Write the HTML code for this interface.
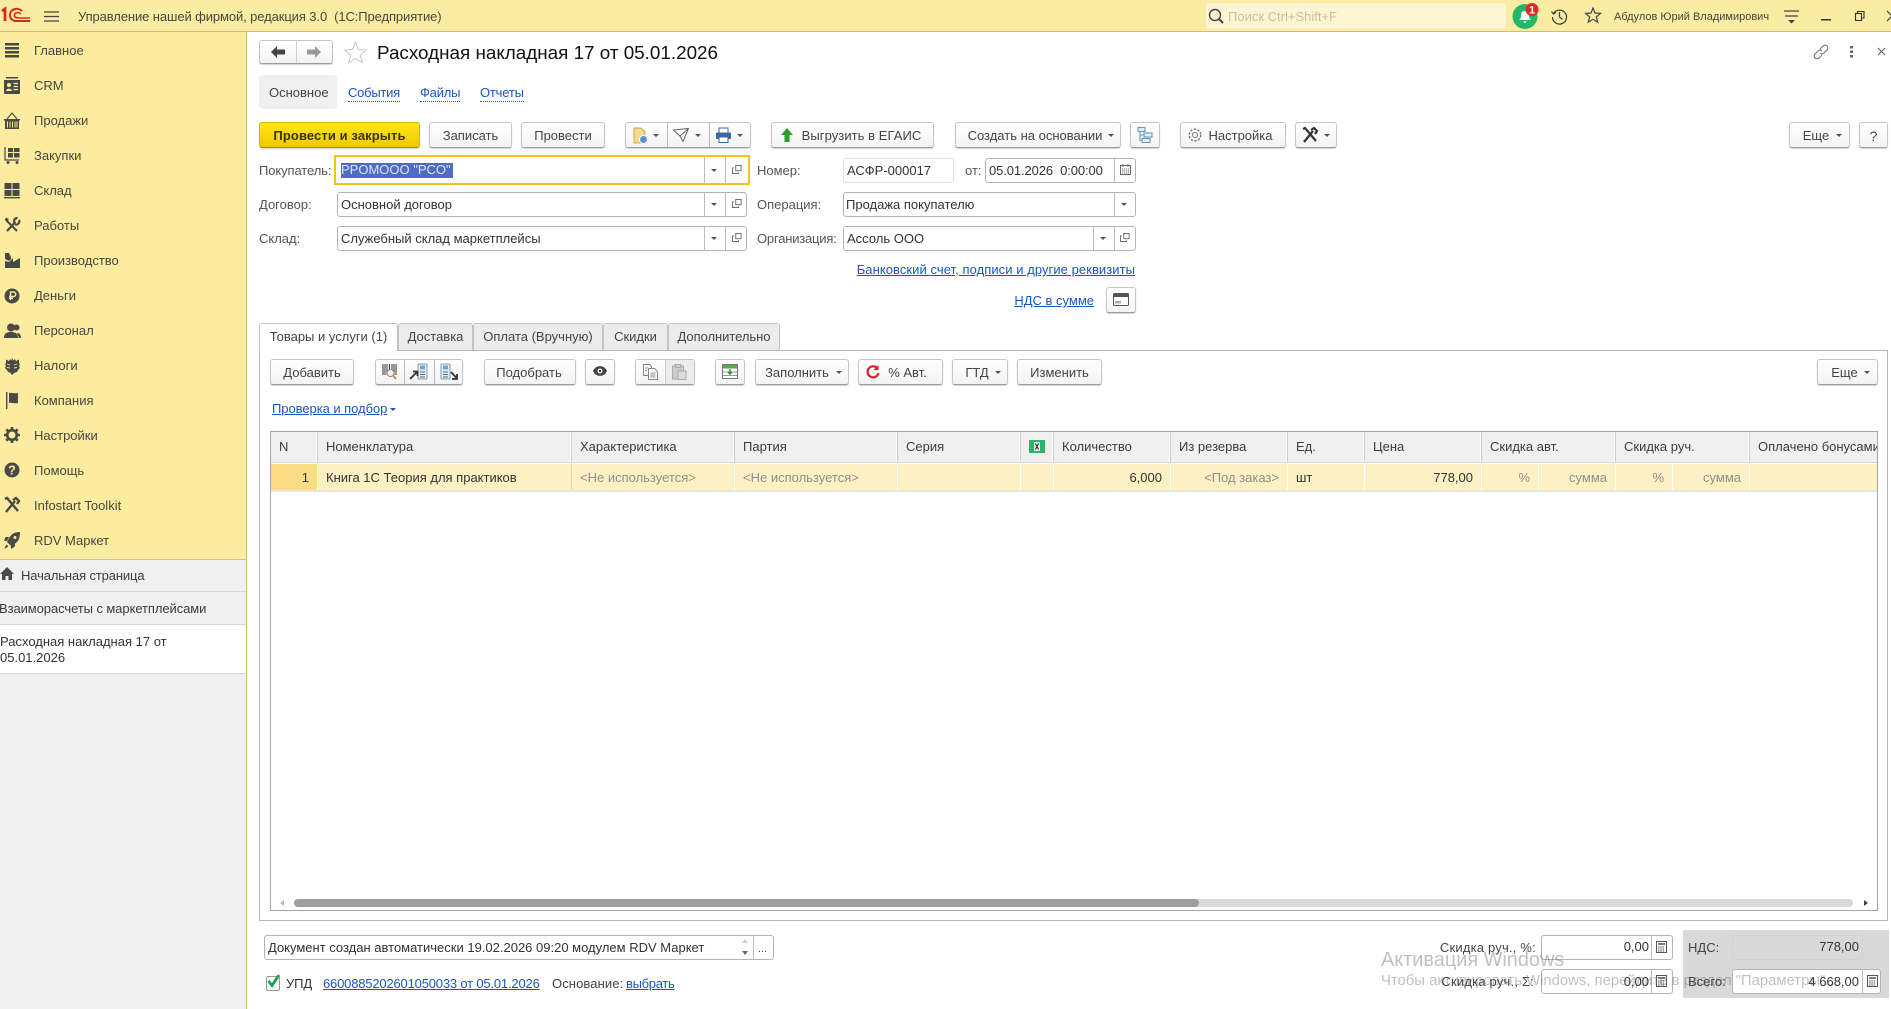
<!DOCTYPE html>
<html lang="ru"><head><meta charset="utf-8"><title>Расходная накладная</title>
<style>
html,body{margin:0;padding:0;width:1891px;height:1009px;overflow:hidden;background:#fff}
body{font-family:"Liberation Sans",Arial,sans-serif;font-size:13px;color:#3c3c3c;position:relative}
.a{position:absolute}
.t{position:absolute;white-space:nowrap;line-height:16px;height:16px}
.b{position:absolute;box-sizing:border-box;height:26px;border:1px solid #c6c6c6;border-bottom:1px solid #9c9c9c;border-radius:3px;background:linear-gradient(#fff,#f3f3f3);box-shadow:0 1px 1px rgba(0,0,0,.18);text-align:center;line-height:26px;white-space:nowrap;color:#444}
.f{position:absolute;box-sizing:border-box;height:25px;border:1px solid #b4b4b4;border-radius:3px;background:#fff}
.d{position:absolute;width:1px;background:#bcbcbc}
.ap{position:absolute;width:0;height:0;border-left:3px solid transparent;border-right:3px solid transparent;border-top:3px solid #555}
.l{color:#1a56c0;text-decoration:underline}
.h{position:absolute;top:432px;height:30px;background:#f0f0f0;border-right:1px solid #cfcfcf;box-shadow:inset -1px 0 0 #fff}
.c{position:absolute;top:464px;height:26px;background:#fdf0c3;border-right:1px solid #fff}
.g{color:#8f8f8f}
.n{position:absolute;left:34px;white-space:nowrap;line-height:16px;color:#47473f}
svg{position:absolute;overflow:visible}
.tb{position:absolute;top:323px;height:27px;box-sizing:border-box;background:#ececec;border:1px solid #c4c4c4;border-bottom:none;border-radius:3px 3px 0 0;text-align:center;line-height:26px;color:#444;white-space:nowrap}
</style></head><body>

<!-- top bar -->
<div class="a" style="left:0;top:0;width:1891px;height:31px;background:#fbeca3;border-bottom:1px solid #cfbd6c;box-sizing:content-box"></div>
<svg style="left:1px;top:7px" width="30" height="17" viewBox="0 0 30 17" fill="none" stroke="#d9281e"><path d="M1 4 L4 2 V14" stroke-width="2.8"/><path d="M21 4 C19 2 16 1.500 14 2 C10 3 9 6 9 8 C9 11 11 14 15 14 H29" stroke-width="2"/><path d="M20 7 C18 5.500 16 5.500 15 6 C13 7 13 9 14 10 C15 11 17 11 29 11" stroke-width="1.600"/></svg>
<svg style="left:44px;top:11px" width="15" height="11" stroke="#444" stroke-width="1.300"><path d="M0 1H15M0 5.500H15M0 10H15"/></svg>
<div class="t" style="left:78px;top:9px;color:#47473c;letter-spacing:-.1px">Управление нашей фирмой, редакция 3.0&nbsp; (1С:Предприятие)</div>

<div class="a" style="left:1206px;top:3px;width:300px;height:26px;background:#fdf6d2;border-radius:3px"></div>
<svg style="left:1208px;top:8px" width="16" height="17" fill="none" stroke="#444" stroke-width="1.400"><circle cx="7" cy="7" r="5.500"/><path d="M11 11l4 4" stroke-width="2"/></svg>
<div class="t" style="left:1228px;top:9px;color:#c4c0a6">Поиск Ctrl+Shift+F</div>
<svg style="left:1512px;top:3px" width="30" height="26"><ellipse cx="13" cy="13.500" rx="12.500" ry="12.500" fill="#21b866"/><path d="M13 8c-3 0-4 2-4 5 0 2-1 3-2 4h12c-1-1-2-2-2-4 0-3-1-5-4-5zM11 18.500h4l-2 2z" fill="#fff"/><circle cx="20" cy="6.500" r="6.500" fill="#e8262a"/><text x="20" y="10.500" font-size="11" font-weight="bold" fill="#fff" text-anchor="middle" font-family="Liberation Sans">1</text></svg>
<svg style="left:1551px;top:8px" width="17" height="17" fill="none" stroke="#444" stroke-width="1.300"><path d="M2.500 5.500A7 7 0 1 1 1.500 9"/><path d="M0.500 3.500l2 2.500 2.500-1.500"/><path d="M8.500 4v5l3 2.500"/></svg>
<svg style="left:1585px;top:7px" width="16" height="16" fill="none" stroke="#444" stroke-width="1.200"><path d="M8 1l2 5 5.500.4-4.200 3.500 1.400 5.300L8 12.300 3.300 15.200l1.400-5.300L.5 6.400 6 6z"/></svg>
<div class="t" style="left:1614px;top:9px;font-size:11px;color:#47473c">Абдулов Юрий Владимирович</div>
<svg style="left:1784px;top:10px" width="15" height="14" stroke="#444" stroke-width="1.200"><path d="M0 1H15M1 6H14"/><path d="M4 10h7l-3.500 3.500z" fill="#444" stroke="none"/></svg>
<svg style="left:1821px;top:19px" width="10" height="2"><rect width="10" height="1.500" fill="#333"/></svg>
<svg style="left:1855px;top:11px" width="10" height="10" fill="none" stroke="#333" stroke-width="1.100"><rect x=".5" y="2.500" width="6" height="7"/><path d="M2.500 2.500V.5H9V7H6.500"/></svg>
<svg style="left:1887px;top:11px" width="6" height="10" stroke="#333" stroke-width="1.100"><path d="M0 0L10 10M10 0L0 10"/></svg>

<!-- sidebar -->
<div class="a" style="left:0;top:32px;width:246px;height:527px;background:#fbec9f;border-right:1px solid #cdbb68"></div>
<div class="a" style="left:0;top:559px;width:247px;height:450px;background:#f0f0f0;border-right:1px solid #cdbb68;border-top:1px solid #cfc493;box-sizing:border-box"></div>
<div class="a" style="left:0;top:591px;width:246px;height:1px;background:#d8d8d8"></div>
<div class="a" style="left:0;top:624px;width:246px;height:50px;background:#fff;border-top:1px solid #d8d8d8;border-bottom:1px solid #d8d8d8;box-sizing:border-box"></div>

<div class="n" style="top:43px">Главное</div>
<div class="n" style="top:78px">CRM</div>
<div class="n" style="top:113px">Продажи</div>
<div class="n" style="top:148px">Закупки</div>
<div class="n" style="top:183px">Склад</div>
<div class="n" style="top:218px">Работы</div>
<div class="n" style="top:253px">Производство</div>
<div class="n" style="top:288px">Деньги</div>
<div class="n" style="top:323px">Персонал</div>
<div class="n" style="top:358px">Налоги</div>
<div class="n" style="top:393px">Компания</div>
<div class="n" style="top:428px">Настройки</div>
<div class="n" style="top:463px">Помощь</div>
<div class="n" style="top:498px">Infostart Toolkit</div>
<div class="n" style="top:533px">RDV Маркет</div>

<svg style="left:5px;top:43px" width="14" height="15" fill="#4a4a44"><rect width="14" height="2.500" y="0"/><rect width="14" height="2.500" y="4"/><rect width="14" height="2.500" y="8"/><rect width="14" height="2.500" y="12"/></svg>
<svg style="left:4px;top:77px" width="16" height="17" fill="#4a4a44"><path d="M2 0h12v1.500H2zM0 3h16v13a1 1 0 0 1-1 1H1a1 1 0 0 1-1-1z"/><circle cx="5" cy="8" r="2" fill="#fbec9f"/><path d="M2 14c0-3 6-3 6 0z" fill="#fbec9f"/><path d="M9.500 6.500H14M9.500 9.500H14M9.500 12.500H14" stroke="#fbec9f" stroke-width="1.200"/></svg>
<svg style="left:4px;top:113px" width="16" height="16" fill="#4a4a44"><path d="M0 6h16v1.500H15V16H1V7.500H0z"/><path d="M3 6L8 0l5 6" fill="none" stroke="#4a4a44" stroke-width="1.200"/><path d="M3.500 8.500v6M6 8.500v6M8.500 8.500v6M11 8.500v6M13 8.500v6" stroke="#fbec9f" stroke-width="1"/></svg>
<svg style="left:4px;top:147px" width="16" height="17" fill="#4a4a44"><path d="M1 0v13h14" fill="none" stroke="#4a4a44" stroke-width="1.200"/><rect x="4" y="1" width="5" height="4"/><rect x="10" y="1" width="5.500" height="4"/><rect x="4" y="6" width="5" height="4.500"/><rect x="10" y="6" width="5.500" height="4.500"/><circle cx="4" cy="15.500" r="1.500"/><circle cx="13" cy="15.500" r="1.500"/></svg>
<svg style="left:4px;top:183px" width="16" height="15" fill="#4a4a44"><rect width="7" height="6" x="0.500"/><rect width="7" height="6" x="8.500"/><rect width="7" height="6" x="0.500" y="7"/><rect width="7" height="6" x="8.500" y="7"/><rect width="16" height="1.400" y="14"/></svg>
<svg style="left:4px;top:217px" width="16" height="16" fill="none" stroke="#4a4a44" stroke-width="2.200"><path d="M3 14L11.500 5"/><path d="M15 3a3.300 3.300 0 0 1-4 4.500M10.500 6a3.300 3.300 0 0 1 3-5"/><path d="M2 3l11 11" stroke-width="2"/><path d="M0.500 2.500l2-2 2.500 2-2 2z" fill="#4a4a44" stroke="none"/></svg>
<svg style="left:5px;top:253px" width="15" height="15" fill="#4a4a44"><path d="M0 6V0h4l2 4v2l-2 2z"/><path d="M0 15V8l4 1 4-4v4l7-4v10z"/></svg>
<svg style="left:4px;top:288px" width="16" height="16"><circle cx="8" cy="8" r="7.500" fill="#4a4a44"/><path d="M6.500 12V4h3a2.200 2.200 0 0 1 0 4.500h-4.500M5 10.300h4" fill="none" stroke="#fbec9f" stroke-width="1.400"/></svg>
<svg style="left:4px;top:323px" width="17" height="16" fill="#4a4a44"><circle cx="7" cy="4.500" r="4"/><path d="M0 15c0-5 3-6 7-6s7 1 7 6z"/><circle cx="12.500" cy="4.500" r="3"/><path d="M15 15h2c0-4-2-5-4-5z"/></svg>
<svg style="left:4px;top:358px" width="16" height="17" fill="#4a4a44"><path d="M8 0l1.500 2.500L11 1l1 2 3-1.500V5l1 1-1 2 1 2-2 2-1 2-2 .5L8 17l-2-2.500L4 14l-1-2-2-2 1-2-1-2 1-1V1.500l3 1.500 1-2 1.500 1.500z"/><path d="M3 6l3 1M13 6l-3 1M3 9.500l3 .5M13 9.500l-3 .5" stroke="#fbec9f" stroke-width=".9"/></svg>
<svg style="left:6px;top:392px" width="13" height="17" fill="#4a4a44"><rect width="1.400" height="17"/><path d="M3 1c3-1 4 1 9 0v10c-4 1-6-1-9 0z"/></svg>
<svg style="left:4px;top:427px" width="16" height="16" viewBox="0 0 16 16"><circle cx="8" cy="8" r="4.800" fill="none" stroke="#4a4a44" stroke-width="2.600"/><path d="M8 0v3M8 13v3M0 8h3M13 8h3M2.300 2.300l2 2M11.700 11.700l2 2M13.700 2.300l-2 2M4.300 11.700l-2 2" stroke="#4a4a44" stroke-width="2.600"/></svg>
<svg style="left:4px;top:462px" width="16" height="16"><circle cx="8" cy="8" r="7.500" fill="#4a4a44"/><text x="8" y="12.500" font-size="12.500" font-weight="bold" fill="#fbec9f" text-anchor="middle" font-family="Liberation Sans">?</text></svg>
<svg style="left:4px;top:497px" width="16" height="16" fill="none" stroke="#4a4a44" stroke-width="2.400"><path d="M2 15L11 4"/><path d="M9 3l3-2 3 3-2 3"/><path d="M1 2l2-1 11 13"/></svg>
<svg style="left:4px;top:532px" width="16" height="17" fill="#4a4a44"><path d="M16 0C10 0 7 2 4 8l-1 2 4 4 2-1c5-3 7-6 7-13z"/><path d="M5 5H1.500L0 9h3zM11 11v3.500L7 17v-3zM2.500 12.500L0 17l4.500-2.500z"/><circle cx="11" cy="5.500" r="1.500" fill="#fbec9f"/></svg>

<svg style="left:0;top:567px" width="14" height="13" fill="#4a4a44"><path d="M7 0l7 7h-2v6H8.500V9h-3v4H2V7H0z"/></svg>
<div class="t" style="left:21px;top:568px;letter-spacing:-.13px">Начальная страница</div>
<div class="t" style="left:-1px;top:601px;letter-spacing:-.08px">Взаиморасчеты с маркетплейсами</div>
<div class="t" style="left:0;top:634px;color:#333">Расходная накладная 17 от</div>
<div class="t" style="left:0;top:650px;color:#333">05.01.2026</div>

<!-- header -->
<div class="b" style="left:259px;top:40px;width:74px;height:24px"></div>
<div class="d" style="left:296px;top:41px;height:22px;background:#d0d0d0"></div>
<svg style="left:271px;top:46px" width="14" height="12" fill="#444"><path d="M0 6l6-6v3.500h8v5H6V12z"/></svg>
<svg style="left:307px;top:46px" width="14" height="12" fill="#999"><path d="M14 6L8 0v3.500H0v5h8V12z"/></svg>
<svg style="left:344px;top:41px" width="23" height="22" fill="#fff" stroke="#c8c8c8"><path d="M11.500 1l3 7.500 8 .5-6.200 5 2 7.500-6.800-4.200L4.700 21.500l2-7.500L.5 9l8-.5z"/></svg>
<div class="t" style="left:377px;top:41px;font-size:18.850px;line-height:23px;height:23px;color:#111">Расходная накладная 17 от 05.01.2026</div>
<svg style="left:1813px;top:44px" width="16" height="16" fill="none" stroke="#777" stroke-width="1.200"><path d="M7 5l3-3a2.800 2.800 0 0 1 4 4l-3 3a2.800 2.800 0 0 1-4 0"/><path d="M9 11l-3 3a2.800 2.800 0 0 1-4-4l3-3a2.800 2.800 0 0 1 4 0"/></svg>
<svg style="left:1850px;top:46px" width="4" height="12" fill="#666"><rect width="3" height="2.500"/><rect width="3" height="2.500" y="4.500"/><rect width="3" height="2.500" y="9"/></svg>
<svg style="left:1877px;top:47px" width="9" height="9" stroke="#666" stroke-width="1.100"><path d="M1 1l7 7M8 1L1 8"/></svg>

<div class="a" style="left:259px;top:75px;width:78px;height:34px;background:#f0f0f0;border-radius:4px"></div>
<div class="t" style="left:269px;top:85px;color:#444">Основное</div>
<div class="t" style="left:348px;top:85px;color:#1a56c0;border-bottom:1px dotted #1a56c0;letter-spacing:-.25px">События</div>
<div class="t" style="left:420px;top:85px;color:#1a56c0;border-bottom:1px dotted #1a56c0;letter-spacing:-.2px">Файлы</div>
<div class="t" style="left:480px;top:85px;color:#1a56c0;border-bottom:1px dotted #1a56c0;letter-spacing:-.2px">Отчеты</div>

<!-- command bar -->
<div class="b" style="left:259px;top:122px;width:161px;background:linear-gradient(#ffe61a,#f0c800);border-color:#d6b400 #d6b400 #a08a00;font-weight:bold;color:#3b3300;letter-spacing:.1px">Провести и закрыть</div>
<div class="b" style="left:429px;top:122px;width:83px">Записать</div>
<div class="b" style="left:521px;top:122px;width:84px">Провести</div>
<div class="b" style="left:625px;top:122px;width:126px"></div>
<div class="d" style="left:667px;top:123px;height:24px"></div><div class="d" style="left:709px;top:123px;height:24px"></div>
<svg style="left:633px;top:127px" width="15" height="17"><path d="M1 1h7l4 4v11H1z" fill="#f6d98c" stroke="#c9a850"/><circle cx="10.500" cy="12.500" r="4" fill="#5b8fd1" stroke="#fff"/></svg>
<div class="ap" style="left:653px;top:134px"></div>
<svg style="left:673px;top:128px" width="16" height="14" fill="none" stroke="#666" stroke-width="1"><path d="M.5 2L15.500.5 10 13.500 7 8zM7 8l8.500-7.500"/></svg>
<div class="ap" style="left:695px;top:134px"></div>
<svg style="left:716px;top:127px" width="15" height="16"><path d="M3 1h9v5H3z" fill="#fff" stroke="#3a6a9c"/><rect y="5.500" width="15" height="6.500" rx="1" fill="#3a6a9c"/><path d="M3 10h9v5.500H3z" fill="#fff" stroke="#3a6a9c"/></svg>
<div class="ap" style="left:737px;top:134px"></div>

<div class="b" style="left:771px;top:122px;width:163px;padding-left:18px;letter-spacing:.06px">Выгрузить в ЕГАИС</div>
<svg style="left:781px;top:128px" width="12" height="14" fill="#2e9e2e"><path d="M6 0l6 7H8.500v7h-5V7H0z"/></svg>
<div class="b" style="left:955px;top:122px;width:166px;padding-right:6px">Создать на основании</div><div class="ap" style="left:1108px;top:134px"></div>
<div class="b" style="left:1130px;top:122px;width:30px"></div>
<svg style="left:1137px;top:127px" width="16" height="16" fill="none" stroke="#6a9abf" stroke-width="1.100"><rect x="1" y=".5" width="7" height="4" fill="#e4eff7"/><rect x="7" y="6" width="8" height="4" fill="#e4eff7"/><rect x="5" y="11.500" width="8" height="4" fill="#e4eff7"/><path d="M3 4.500V13.500H5M3 8H7"/></svg>
<div class="b" style="left:1180px;top:122px;width:106px;padding-left:15px">Настройка</div>
<svg style="left:1187px;top:127px" width="16" height="16" viewBox="0 0 16 16" fill="none" stroke="#777"><circle cx="8" cy="8" r="2.500"/><circle cx="8" cy="8" r="5.800" stroke-width="1.400" stroke-dasharray="2.300 1.400"/></svg>
<div class="b" style="left:1295px;top:122px;width:42px"></div>
<svg style="left:1302px;top:127px" width="16" height="16" fill="none" stroke="#333" stroke-width="2.200"><path d="M2 15L11 4"/><path d="M9 3l3-2 3 3-2 3"/><path d="M1 2l2-1 11 13"/></svg>
<div class="ap" style="left:1324px;top:134px"></div>
<div class="b" style="left:1789px;top:122px;width:61px;padding-right:7px">Еще</div><div class="ap" style="left:1836px;top:134px"></div>
<div class="b" style="left:1859px;top:122px;width:29px;font-size:14px">?</div>

<!-- form left -->
<div class="t" style="left:259px;top:163px;color:#555;letter-spacing:-.1px">Покупатель:</div>
<div class="t" style="left:259px;top:197px;color:#555">Договор:</div>
<div class="t" style="left:259px;top:231px;color:#555">Склад:</div>
<div class="a" style="left:334px;top:155px;width:416px;height:30px;box-sizing:border-box;border:2px solid #f5c518;background:#fff"></div>
<div class="a" style="left:341px;top:163px;width:112px;height:15px;background:#4f6cc4"></div>
<div class="t" style="left:341px;top:162px;color:#dfe5f5">PPOMOOO "PCO"</div>
<div class="d" style="left:704px;top:157px;height:26px"></div><div class="d" style="left:725px;top:157px;height:26px"></div>
<div class="ap" style="left:711px;top:169px"></div>
<svg style="left:732px;top:165px" width="10" height="9" viewBox="0 0 12 11" fill="none" stroke="#555"><rect x="4.500" y=".5" width="6.500" height="6.500"/><path d="M2.500 3.500H.5V10.500H8V9"/></svg>

<div class="f" style="left:337px;top:192px;width:410px"></div>
<div class="t" style="left:341px;top:197px;color:#333">Основной договор</div>
<div class="d" style="left:704px;top:193px;height:23px"></div><div class="d" style="left:725px;top:193px;height:23px"></div>
<div class="ap" style="left:711px;top:203px"></div>
<svg style="left:732px;top:199px" width="10" height="9" viewBox="0 0 12 11" fill="none" stroke="#555"><rect x="4.500" y=".5" width="6.500" height="6.500"/><path d="M2.500 3.500H.5V10.500H8V9"/></svg>

<div class="f" style="left:337px;top:226px;width:410px"></div>
<div class="t" style="left:341px;top:231px;color:#333">Служебный склад маркетплейсы</div>
<div class="d" style="left:704px;top:227px;height:23px"></div><div class="d" style="left:725px;top:227px;height:23px"></div>
<div class="ap" style="left:711px;top:237px"></div>
<svg style="left:732px;top:233px" width="10" height="9" viewBox="0 0 12 11" fill="none" stroke="#555"><rect x="4.500" y=".5" width="6.500" height="6.500"/><path d="M2.500 3.500H.5V10.500H8V9"/></svg>

<!-- form right -->
<div class="t" style="left:757px;top:163px;color:#555">Номер:</div>
<div class="f" style="left:843px;top:158px;width:111px;border-color:#e0e0e0"></div>
<div class="t" style="left:847px;top:163px;color:#333">АСФР-000017</div>
<div class="t" style="left:965px;top:163px;color:#555">от:</div>
<div class="f" style="left:985px;top:158px;width:151px"></div>
<div class="t" style="left:989px;top:163px;color:#333;letter-spacing:-.1px">05.01.2026&nbsp; 0:00:00</div>
<div class="d" style="left:1114px;top:159px;height:23px"></div>
<svg style="left:1120px;top:164px" width="11" height="11" fill="none" stroke="#666"><rect x=".5" y="1.500" width="10" height="9"/><path d="M3 0v3M8 0v3" /><path d="M2 5h7M2 7h7M2 9h7" stroke-dasharray="1.200 .8"/></svg>

<div class="t" style="left:757px;top:197px;color:#555">Операция:</div>
<div class="f" style="left:843px;top:192px;width:293px"></div>
<div class="t" style="left:846px;top:197px;color:#333">Продажа покупателю</div>
<div class="d" style="left:1114px;top:193px;height:23px"></div>
<div class="ap" style="left:1121px;top:203px"></div>

<div class="t" style="left:757px;top:231px;color:#555;letter-spacing:-.2px">Организация:</div>
<div class="f" style="left:843px;top:226px;width:293px"></div>
<div class="t" style="left:847px;top:231px;color:#333">Ассоль ООО</div>
<div class="d" style="left:1093px;top:227px;height:23px"></div><div class="d" style="left:1114px;top:227px;height:23px"></div>
<div class="ap" style="left:1100px;top:237px"></div>
<svg style="left:1120px;top:233px" width="10" height="9" viewBox="0 0 12 11" fill="none" stroke="#555"><rect x="4.500" y=".5" width="6.500" height="6.500"/><path d="M2.500 3.500H.5V10.500H8V9"/></svg>

<div class="t l" style="right:756px;top:262px;letter-spacing:.06px">Банковский счет, подписи и другие реквизиты</div>
<div class="t l" style="right:797px;top:293px">НДС в сумме</div>
<div class="b" style="left:1106px;top:287px;width:30px"></div>
<svg style="left:1113px;top:293px" width="16" height="13"><rect x=".5" y=".5" width="15" height="12" rx="1" fill="#fff" stroke="#555"/><rect x="1" y="1" width="14" height="3" fill="#555"/><path d="M3 8v2.500M5 8v2.500M7 8v2.500" stroke="#555"/></svg>

<!-- tabs and panel -->
<div class="a" style="left:259px;top:350px;width:1629px;height:571px;box-sizing:border-box;border:1px solid #b6b6b6"></div>
<div class="tb" style="left:398px;width:75px">Доставка</div>
<div class="tb" style="left:473px;width:130px">Оплата (Вручную)</div>
<div class="tb" style="left:603px;width:65px">Скидки</div>
<div class="tb" style="left:668px;width:112px;letter-spacing:-.05px">Дополнительно</div>
<div class="tb" style="left:259px;width:139px;height:28px;background:#fff;z-index:2">Товары и услуги (1)</div>

<!-- panel toolbar -->
<div class="b" style="left:270px;top:359px;width:84px">Добавить</div>
<div class="b" style="left:375px;top:359px;width:88px"></div>
<div class="d" style="left:404px;top:360px;height:24px"></div><div class="d" style="left:434px;top:360px;height:24px"></div>
<svg style="left:382px;top:364px" width="17" height="16"><path d="M1 0v11M3 0v11M5 0v11M7.500 0v7M10 0v7M12 0v11M14 0v11" stroke="#333"/><circle cx="8.500" cy="9" r="3.500" fill="#f3f6f9" stroke="#888"/><path d="M11 11.500l3 3.500" stroke="#d2883c" stroke-width="2"/></svg>
<svg style="left:410px;top:364px" width="18" height="16"><rect x="8" y="0" width="9" height="15" rx="1" fill="#e6eef4" stroke="#7b9db6"/><rect x="10" y="1.500" width="5" height="4" fill="#67a9dc"/><path d="M10 8h5M10 10.500h5M10 13h5" stroke="#666"/><path d="M0 15L7 8M3 7.500h4.500V12" fill="none" stroke="#333" stroke-width="1.800"/></svg>
<svg style="left:440px;top:364px" width="18" height="16"><rect x="1" y="0" width="9" height="15" rx="1" fill="#e6eef4" stroke="#7b9db6"/><rect x="3" y="1.500" width="5" height="4" fill="#67a9dc"/><path d="M3 8h5M3 10.500h5M3 13h5" stroke="#666"/><path d="M11 8l6 6.500M17 10v5h-5" fill="none" stroke="#333" stroke-width="1.800"/></svg>
<div class="b" style="left:484px;top:359px;width:92px;padding-right:2px">Подобрать</div>
<div class="b" style="left:585px;top:359px;width:30px"></div>
<svg style="left:593px;top:366px" width="14" height="10"><path d="M0 5c3-6.500 11-6.500 14 0-3 6.500-11 6.500-14 0z" fill="#444"/><circle cx="7" cy="5" r="2.500" fill="#fff"/><circle cx="7" cy="5" r="1.200" fill="#444"/></svg>
<div class="b" style="left:635px;top:359px;width:60px;"></div>
<div class="a" style="left:666px;top:360px;width:28px;height:24px;background:#ececec"></div>
<div class="d" style="left:665px;top:360px;height:24px;background:#d0d0d0"></div>
<svg style="left:643px;top:364px" width="15" height="16" fill="#fff" stroke="#888"><path d="M.5.500h6l2 2v9h-8z"/><path d="M5.500 4.500h6l3 3v8h-9z"/><path d="M2 4h3M2 6.500h2M7.500 9h5M7.500 11h5M7.500 13h5" stroke-width=".9"/></svg>
<svg style="left:672px;top:364px" width="15" height="16" fill="#ccc" stroke="#aaa"><rect x=".5" y="2" width="11" height="13"/><rect x="3" y="0.500" width="6" height="3"/><path d="M6 7h8v8.500H6z" fill="#ddd"/></svg>
<div class="b" style="left:715px;top:359px;width:30px"></div>
<svg style="left:722px;top:364px" width="16" height="15" fill="none"><rect x=".5" y=".5" width="15" height="14" stroke="#777" fill="#fff"/><rect x="1" y="1" width="14" height="3.500" fill="#5aaa48"/><path d="M1 8h14M1 11.500h14" stroke="#999"/><path d="M8 5v5M6 8l2 2 2-2" stroke="#2a8a2a" stroke-width="1.400"/></svg>
<div class="b" style="left:755px;top:359px;width:94px;padding-right:10px">Заполнить</div><div class="ap" style="left:836px;top:371px"></div>
<div class="b" style="left:858px;top:359px;width:85px;padding-left:14px">% Авт.</div>
<svg style="left:866px;top:365px" width="14" height="14" fill="none" stroke="#e01f24" stroke-width="2.200"><path d="M11.500 3.500A5.500 5.500 0 1 0 12.500 8"/><path d="M12.500 0v5h-5z" fill="#e01f24" stroke="none"/></svg>
<div class="b" style="left:952px;top:359px;width:56px;padding-right:6px">ГТД</div><div class="ap" style="left:995px;top:371px"></div>
<div class="b" style="left:1017px;top:359px;width:85px">Изменить</div>
<div class="b" style="left:1817px;top:359px;width:61px;padding-right:6px">Еще</div><div class="ap" style="left:1864px;top:371px"></div>

<div class="t l" style="left:272px;top:401px;letter-spacing:-.05px">Проверка и подбор</div>
<div class="ap" style="left:390px;top:408px;border-top-color:#1a56c0"></div>

<!-- table -->
<div class="a" style="left:270px;top:431px;width:1608px;height:480px;box-sizing:border-box;border:1px solid #a6a6a6"></div>
<div class="h" style="left:271px;width:46px"></div>
<div class="h" style="left:318px;width:253px"></div>
<div class="h" style="left:572px;width:162px"></div>
<div class="h" style="left:735px;width:162px"></div>
<div class="h" style="left:898px;width:122px"></div>
<div class="h" style="left:1021px;width:32px"></div>
<div class="h" style="left:1054px;width:116px"></div>
<div class="h" style="left:1171px;width:116px"></div>
<div class="h" style="left:1288px;width:76px"></div>
<div class="h" style="left:1365px;width:116px"></div>
<div class="h" style="left:1482px;width:133px"></div>
<div class="h" style="left:1616px;width:133px"></div>
<div class="h" style="left:1750px;width:127px;border-right:none;box-shadow:none"></div>
<div class="a" style="left:271px;top:462px;width:1606px;height:1px;background:#d6d6d6"></div>

<div class="t" style="left:279px;top:439px">N</div>
<div class="t" style="left:326px;top:439px">Номенклатура</div>
<div class="t" style="left:580px;top:439px">Характеристика</div>
<div class="t" style="left:743px;top:439px">Партия</div>
<div class="t" style="left:906px;top:439px">Серия</div>
<svg style="left:1029px;top:440px" width="16" height="14"><rect width="16" height="13" fill="#2fb36a"/><rect x="5" y="2" width="6" height="9" fill="#e4efe6"/><path d="M6.500 3.500l3 6M9.500 3.500l-3 6" stroke="#222"/></svg>
<div class="t" style="left:1062px;top:439px">Количество</div>
<div class="t" style="left:1179px;top:439px">Из резерва</div>
<div class="t" style="left:1296px;top:439px">Ед.</div>
<div class="t" style="left:1373px;top:439px">Цена</div>
<div class="t" style="left:1490px;top:439px">Скидка авт.</div>
<div class="t" style="left:1624px;top:439px">Скидка руч.</div>
<div class="a" style="left:1758px;top:439px;width:119px;height:16px;overflow:hidden;white-space:nowrap;line-height:16px">Оплачено бонусами</div>

<div class="c" style="left:271px;width:46px;background:#fbdc87;border-right:none"></div>
<div class="c" style="left:318px;width:253px;border-right-color:#e0d8b8"></div>
<div class="c" style="left:572px;width:162px"></div>
<div class="c" style="left:735px;width:162px"></div>
<div class="c" style="left:898px;width:122px"></div>
<div class="c" style="left:1021px;width:32px"></div>
<div class="c" style="left:1054px;width:116px"></div>
<div class="c" style="left:1171px;width:116px"></div>
<div class="c" style="left:1288px;width:76px"></div>
<div class="c" style="left:1365px;width:116px"></div>
<div class="c" style="left:1482px;width:56px"></div>
<div class="c" style="left:1539px;width:76px"></div>
<div class="c" style="left:1616px;width:56px"></div>
<div class="c" style="left:1673px;width:76px"></div>
<div class="c" style="left:1750px;width:127px;border-right:none"></div>
<div class="a" style="left:271px;top:490px;width:1606px;height:2px;background:#e6e6e6"></div>

<div class="t" style="right:1582px;top:470px;color:#333">1</div>
<div class="t" style="left:326px;top:470px;color:#333">Книга 1С Теория для практиков</div>
<div class="t g" style="left:580px;top:470px">&lt;Не используется&gt;</div>
<div class="t g" style="left:743px;top:470px">&lt;Не используется&gt;</div>
<div class="t" style="right:729px;top:470px;color:#333">6,000</div>
<div class="t g" style="right:612px;top:470px">&lt;Под заказ&gt;</div>
<div class="t" style="left:1296px;top:470px;color:#333">шт</div>
<div class="t" style="right:418px;top:470px;color:#333">778,00</div>
<div class="t g" style="right:361px;top:470px">%</div>
<div class="t g" style="right:284px;top:470px">сумма</div>
<div class="t g" style="right:227px;top:470px">%</div>
<div class="t g" style="right:150px;top:470px">сумма</div>

<!-- scrollbar -->
<div class="a" style="left:294px;top:899px;width:1559px;height:8px;background:#d9d9d9;border-radius:4px"></div>
<div class="a" style="left:294px;top:899px;width:905px;height:8px;background:#9e9e9e;border-radius:4px"></div>
<div class="a" style="left:280px;top:900px;width:0;height:0;border-top:3px solid transparent;border-bottom:3px solid transparent;border-right:4px solid #bbb"></div>
<div class="a" style="left:1864px;top:900px;width:0;height:0;border-top:3px solid transparent;border-bottom:3px solid transparent;border-left:4px solid #444"></div>

<!-- bottom left -->
<div class="f" style="left:264px;top:935px;width:510px"></div>
<div class="t" style="left:268px;top:940px;color:#333">Документ создан автоматически 19.02.2026 09:20 модулем RDV Маркет</div>
<div class="d" style="left:753px;top:936px;height:23px"></div>
<div class="a" style="left:742px;top:939px;width:0;height:0;border-left:3px solid transparent;border-right:3px solid transparent;border-bottom:4px solid #ccc"></div>
<div class="a" style="left:742px;top:951px;width:0;height:0;border-left:3px solid transparent;border-right:3px solid transparent;border-top:4px solid #666"></div>
<div class="t" style="left:758px;top:941px;font-size:11px">...</div>
<div class="a" style="left:266px;top:976px;width:14px;height:15px;box-sizing:border-box;border:1px solid #999;border-radius:2px;background:#fff"></div>
<svg style="left:266px;top:973px" width="15" height="15" fill="none" stroke="#17a34a" stroke-width="2.800"><path d="M2.500 8l3.500 4.500L13 2"/></svg>
<div class="t" style="left:286px;top:976px;color:#333;letter-spacing:-.1px">УПД</div>
<div class="t l" style="left:323px;top:976px;letter-spacing:-.18px">6600885202601050033 от 05.01.2026</div>
<div class="t" style="left:552px;top:976px;color:#444;letter-spacing:.1px">Основание:</div>
<div class="t l" style="left:626px;top:976px;letter-spacing:-.3px">выбрать</div>

<!-- bottom right -->
<div class="a" style="left:1683px;top:930px;width:206px;height:68px;background:#d9d9d9"></div>
<div class="t" style="right:355px;top:940px;color:#444;letter-spacing:.2px">Скидка руч., %:</div>
<div class="f" style="left:1541px;top:935px;width:132px"></div>
<div class="d" style="left:1651px;top:936px;height:23px"></div>
<div class="t" style="right:242px;top:939px;color:#333">0,00</div>
<svg style="left:1656px;top:941px" width="11" height="12" fill="none" stroke="#555"><rect x=".5" y=".5" width="10" height="11"/><path d="M2 3h7" stroke-width="1.500"/><path d="M2 6h7M2 8h7M2 10h7" stroke-dasharray="1.500 .8"/></svg>
<div class="t" style="right:357px;top:974px;color:#444;letter-spacing:.2px">Скидка руч., Σ:</div>
<div class="f" style="left:1541px;top:969px;width:132px"></div>
<div class="d" style="left:1651px;top:970px;height:23px"></div>
<div class="t" style="right:242px;top:974px;color:#333">0,00</div>
<svg style="left:1656px;top:975px" width="11" height="12" fill="none" stroke="#555"><rect x=".5" y=".5" width="10" height="11"/><path d="M2 3h7" stroke-width="1.500"/><path d="M2 6h7M2 8h7M2 10h7" stroke-dasharray="1.500 .8"/></svg>
<div class="t" style="left:1688px;top:940px;color:#444">НДС:</div>
<div class="a" style="left:1732px;top:935px;width:131px;height:25px;box-sizing:border-box;border:1px solid #d2d2d2;border-radius:3px"></div>
<div class="t" style="right:32px;top:939px;color:#333">778,00</div>
<div class="t" style="left:1688px;top:974px;color:#444">Всего:</div>
<div class="f" style="left:1732px;top:969px;width:149px"></div>
<div class="d" style="left:1862px;top:970px;height:23px"></div>
<div class="t" style="right:32px;top:974px;color:#333">4 668,00</div>
<svg style="left:1867px;top:975px" width="11" height="12" fill="none" stroke="#555"><rect x=".5" y=".5" width="10" height="11"/><path d="M2 3h7" stroke-width="1.500"/><path d="M2 6h7M2 8h7M2 10h7" stroke-dasharray="1.500 .8"/></svg>

<!-- watermark -->
<div class="t" style="left:1381px;top:948px;height:24px;line-height:24px;font-size:19.900px;color:rgba(90,90,90,.38);z-index:9">Активация Windows</div>
<div class="t" style="left:1381px;top:973px;font-size:14.850px;color:rgba(90,90,90,.38);z-index:9">Чтобы активировать Windows, перейдите в раздел "Параметры".</div>
</body></html>
